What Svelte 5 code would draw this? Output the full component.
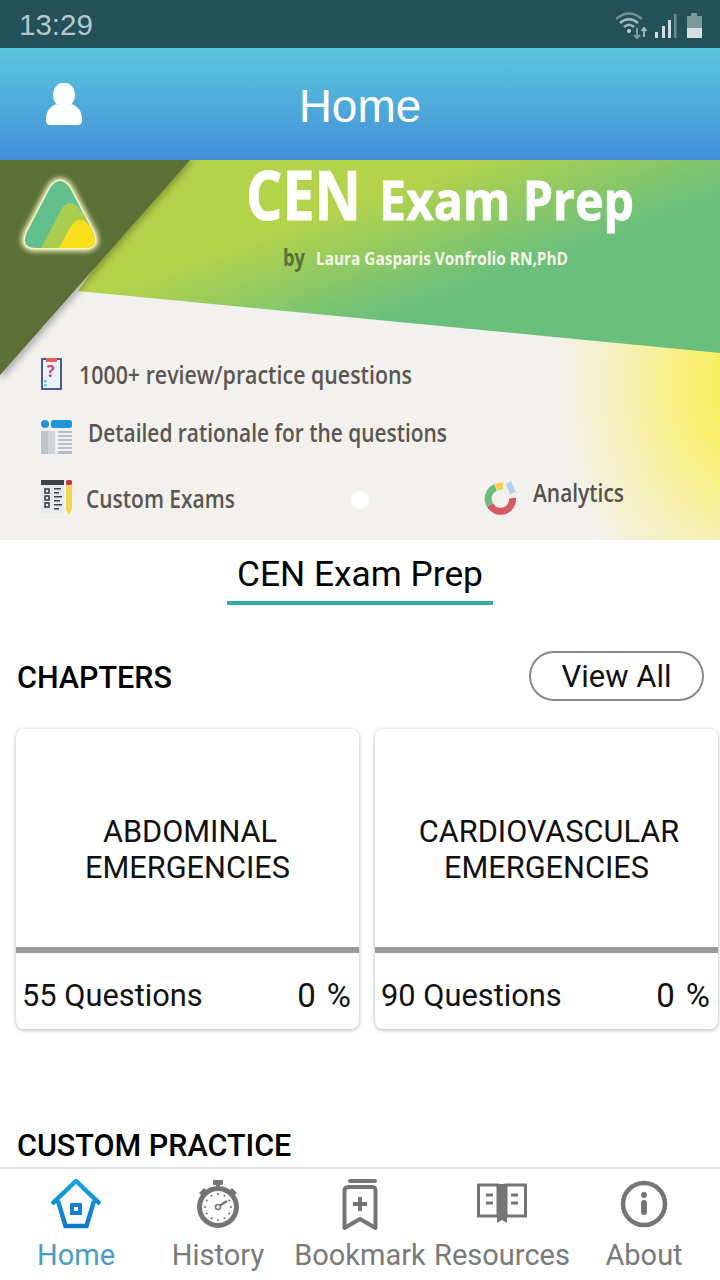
<script>
  const chapters = [
    { name: ['ABDOMINAL', 'EMERGENCIES'], questions: 55 },
    { name: ['CARDIOVASCULAR', 'EMERGENCIES'], questions: 90 }
  ];
  const ticks = Array.from({ length: 12 }, (_, i) => {
    const a = (i * Math.PI) / 6;
    return { x: 22 + 13 * Math.cos(a), y: 28 + 13 * Math.sin(a) };
  });
</script>

<div class="screen">
  <div class="status">
    <span class="time">13:29</span>
    <svg class="status-icons" width="88" height="32" viewBox="0 0 88 32" aria-hidden="true">
      <g fill="none" stroke="#a3bbbe" stroke-width="2.400">
        <path d="M0 10 Q13 -1 26 10" opacity=".6"/>
        <path d="M4 14 Q13 6.500 22 14"/>
        <path d="M8 18 Q13 13.500 18 18"/>
      </g>
      <circle cx="13" cy="22" r="2" fill="#c4d4d6"/>
      <path d="M21 19v10m-3-3 3 3 3-3" stroke="#7f9a9e" stroke-width="2" fill="none"/>
      <path d="M28 28v-9m-2.500 3 2.500-3 2.500 3" stroke="#a8bfc2" stroke-width="1.800" fill="none"/>
      <g fill="#cfdcdd">
        <rect x="39" y="23" width="3" height="6"/>
        <rect x="46" y="17" width="3" height="12"/>
        <rect x="52" y="11" width="3" height="18"/>
      </g>
      <rect x="58" y="5" width="2.500" height="24" fill="#6f8d91"/>
      <rect x="75" y="4" width="6" height="3" fill="#7d989b"/>
      <rect x="71" y="7" width="15" height="12" fill="#7d989b"/>
      <rect x="71" y="19" width="15" height="10" fill="#d5dfe0"/>
    </svg>
  </div>

  <header class="topbar">
    <svg class="user" width="38" height="42" viewBox="0 0 38 42" aria-hidden="true">
      <ellipse cx="19" cy="12" rx="11" ry="12.500" fill="#fff"/>
      <path d="M11 21 Q19 27 27 21 Q37 25 37 36 V38 Q37 42 33 42 H5 Q1 42 1 38 V36 Q1 25 11 21Z" fill="#fff"/>
    </svg>
    <h1>Home</h1>
  </header>

  <section class="banner">
    <svg width="720" height="380" viewBox="0 0 720 380" role="img" aria-label="CEN Exam Prep banner">
      <defs>
        <linearGradient id="lime" gradientUnits="userSpaceOnUse" x1="405" y1="25" x2="445" y2="135">
          <stop offset="0" stop-color="#b3d34b"/>
          <stop offset="1" stop-color="#6bbf7d"/>
        </linearGradient>
        <radialGradient id="sun" gradientUnits="userSpaceOnUse" cx="0" cy="0" r="1" gradientTransform="translate(750 225) scale(195 260)">
          <stop offset="0" stop-color="#fbee4e"/>
          <stop offset=".3" stop-color="#f9ef72"/>
          <stop offset=".65" stop-color="#f6f1b8"/>
          <stop offset="1" stop-color="#f3f1ee"/>
        </radialGradient>
        <filter id="soft" x="-20%" y="-20%" width="140%" height="140%"><feGaussianBlur stdDeviation="3.500"/></filter>
        <filter id="glow" x="-30%" y="-30%" width="160%" height="160%"><feGaussianBlur stdDeviation="2.500"/></filter>
        <clipPath id="logoClip"><path d="M50 28 Q60 14 70 28 L93 72 Q100 88 84 88 H36 Q20 88 27 72Z"/></clipPath>
      </defs>
      <rect width="720" height="380" fill="#f3f1ee"/>
      <rect x="500" y="160" width="220" height="220" fill="url(#sun)"/>
      <polygon points="78,131 720,193 720,0 170,0" fill="url(#lime)"/>
      <polygon points="4,217 194,0 0,0 0,217" fill="#000" opacity=".28" filter="url(#soft)"/>
      <polygon points="0,215 190,0 0,0" fill="#5a7036"/>

      <path d="M50 28 Q60 14 70 28 L93 72 Q100 88 84 88 H36 Q20 88 27 72Z" fill="none" stroke="#f6f2bd" stroke-width="7" filter="url(#glow)"/>
      <path d="M50 28 Q60 14 70 28 L93 72 Q100 88 84 88 H36 Q20 88 27 72Z" fill="none" stroke="#f6f2c8" stroke-width="3"/>
      <g clip-path="url(#logoClip)">
        <rect x="20" y="10" width="80" height="80" fill="#62c08c"/>
        <path d="M40 90 L60 52 Q67 38 77 46 L104 80 V90Z" fill="#a9cb4e"/>
        <path d="M58 90 L70 68 Q78 54 88 64 L104 78 V90Z" fill="#fbdf1b"/>
      </g>

      <text class="bn b hv" x="246" y="60" font-size="68" fill="#fff" textLength="115" lengthAdjust="spacingAndGlyphs">CEN</text>
      <text class="bn b hv" x="379" y="60" font-size="54" fill="#fff" textLength="255" lengthAdjust="spacingAndGlyphs">Exam Prep</text>
      <text class="bn b" x="283" y="106" font-size="24" fill="#5a7036" textLength="22" lengthAdjust="spacingAndGlyphs">by</text>
      <text class="bn b" x="316" y="105" font-size="17" fill="#f6f6e6" textLength="252" lengthAdjust="spacingAndGlyphs">Laura Gasparis Vonfrolio RN,PhD</text>

      <text class="bn m" x="79" y="224" font-size="25" fill="#5a5651" textLength="333" lengthAdjust="spacingAndGlyphs">1000+ review/practice questions</text>
      <text class="bn m" x="88" y="282" font-size="25" fill="#5a5651" textLength="359" lengthAdjust="spacingAndGlyphs">Detailed rationale for the questions</text>
      <text class="bn m" x="86" y="348" font-size="25" fill="#5a5651" textLength="149" lengthAdjust="spacingAndGlyphs">Custom Exams</text>
      <text class="bn m" x="533" y="342" font-size="25" fill="#55514d" textLength="91" lengthAdjust="spacingAndGlyphs">Analytics</text>

      <!-- clipboard -->
      <rect x="42" y="199" width="19" height="30" fill="#e9f1f6" stroke="#4a5a8c" stroke-width="2"/>
      <rect x="46" y="198" width="11" height="4" fill="#e8605c"/>
      <text class="bn b" x="47" y="217" font-size="16" fill="#d83a78">?</text>
      <rect x="44" y="220" width="2.500" height="2.500" fill="#6ec2c8"/>
      <rect x="44" y="224" width="2.500" height="2.500" fill="#6ec2c8"/>

      <!-- rationale -->
      <circle cx="45" cy="264" r="4" fill="#1e98dc"/>
      <rect x="51" y="260" width="21" height="8" rx="2.500" fill="#1e98dc"/>
      <rect x="41" y="271" width="14" height="23" rx="1" fill="#bcc5c9"/>
      <rect x="48" y="271" width="7" height="23" fill="#d0d6d9"/>
      <g fill="#b4bfc3">
        <rect x="58" y="271" width="14" height="2"/><rect x="58" y="275" width="14" height="2"/>
        <rect x="58" y="279" width="14" height="2"/><rect x="58" y="283" width="14" height="2"/>
        <rect x="58" y="287" width="14" height="2"/><rect x="58" y="291" width="14" height="3"/>
      </g>

      <!-- custom exams -->
      <rect x="41" y="320" width="23" height="33" fill="#e6e8f2"/>
      <rect x="41" y="320" width="23" height="5" fill="#3f4246"/>
      <g fill="none" stroke="#3f4246" stroke-width="1.600">
        <rect x="45" y="329" width="4" height="4"/><rect x="45" y="336" width="4" height="4"/><rect x="45" y="343" width="4" height="4"/>
      </g>
      <g fill="#3f4246">
        <rect x="54" y="328" width="7" height="1.500"/><rect x="54" y="332" width="5" height="1.500"/>
        <rect x="54" y="336" width="8" height="1.500"/><rect x="54" y="340" width="6" height="1.500"/>
        <rect x="54" y="344" width="8" height="1.500"/><rect x="54" y="348" width="5" height="1.500"/>
      </g>
      <path d="M66 325 h6 v24 l-3 6 l-3 -6Z" fill="#f5d451"/>
      <rect x="66" y="320" width="6" height="5" rx="1.500" fill="#c6384f"/>

      <!-- analytics donut -->
      <g fill="none" stroke-width="7">
        <path d="M490 345 A12 12 0 0 0 512.500 338" stroke="#d65a63"/>
        <path d="M490 345 A12 12 0 0 1 495.500 327.500" stroke="#6fbd7c"/>
        <path d="M496 327.500 A12 12 0 0 1 503 326" stroke="#f5cf4f"/>
        <path d="M508.500 322.500 L513 333" stroke="#b5d0ef" stroke-width="6"/>
      </g>

      <circle cx="360" cy="340" r="9" fill="#fff"/>
    </svg>
  </section>

  <main class="content">
    <div class="tab"><span>CEN Exam Prep</span></div>

    <div class="section-head">
      <h2>CHAPTERS</h2>
      <button type="button">View All</button>
    </div>

    <div class="cards">
      {#each chapters as c}
        <article class="card">
          <div class="card-name"><span class="first">{c.name[0]}</span><span>{c.name[1]}</span></div>
          <div class="progress"></div>
          <div class="card-foot">
            <span>{c.questions} Questions</span>
            <span class="pct"><span>0</span><span>%</span></span>
          </div>
        </article>
      {/each}
    </div>

    <h2 class="custom">CUSTOM PRACTICE</h2>
  </main>

  <nav class="nav">
    <div class="item active">
      <svg width="50" height="52" viewBox="0 0 50 52" aria-hidden="true">
        <defs>
          <linearGradient id="homeG" gradientUnits="userSpaceOnUse" x1="0" y1="0" x2="0" y2="50">
            <stop offset="0" stop-color="#14a6de"/><stop offset="1" stop-color="#1077c9"/>
          </linearGradient>
        </defs>
        <path d="M1 25 L25 2 L49 25 M7 22 L14.500 47 H35.500 L43 22" fill="none" stroke="url(#homeG)" stroke-width="4.500" stroke-linejoin="miter"/>
        <rect x="19" y="24" width="12" height="12" fill="#1580cf"/>
        <rect x="23" y="28" width="4" height="4" fill="#fff"/>
      </svg>
      <span>Home</span>
    </div>
    <div class="item">
      <svg width="50" height="52" viewBox="0 0 44 52" aria-hidden="true">
        <rect x="17" y="1" width="10" height="5" rx="1" fill="#757575"/>
        <rect x="20" y="5" width="4" height="5" fill="#757575"/>
        <path d="M3 14 L8 9 L12 13 L7 18Z M41 14 L36 9 L32 13 L37 18Z" fill="#757575"/>
        <circle cx="22" cy="28" r="18.500" fill="#fff" stroke="#757575" stroke-width="5"/>
        {#each ticks as t}<circle cx={t.x} cy={t.y} r="1.100" fill="#757575"/>{/each}
        <circle cx="22" cy="28" r="2.500" fill="none" stroke="#757575" stroke-width="1.500"/>
        <path d="M24 26.500 L31 22" stroke="#757575" stroke-width="2.200"/>
      </svg>
      <span>History</span>
    </div>
    <div class="item">
      <svg width="50" height="52" viewBox="0 0 50 52" aria-hidden="true">
        <path d="M15 2 H40" stroke="#757575" stroke-width="4" stroke-linecap="round"/>
        <path d="M10 50 V13 Q10 9 14 9 H38 Q41 9 41 13 V50 L25.500 41Z" transform="translate(-.5 -1)" fill="none" stroke="#757575" stroke-width="4" stroke-linejoin="round"/>
        <path d="M25 18 V32 M18 25 H32" stroke="#757575" stroke-width="4"/>
      </svg>
      <span>Bookmark</span>
    </div>
    <div class="item">
      <svg width="50" height="52" viewBox="0 0 50 52" aria-hidden="true">
        <path d="M21 6 H1.500 V37 H21Z M29 6 H48.500 V37 H29Z" fill="#fff" stroke="#757575" stroke-width="3"/>
        <rect x="21" y="5" width="8" height="33" fill="#757575"/>
        <path d="M20 38 H30 V44 L25 41 L20 44Z" fill="#757575"/>
        <path d="M9 16 H16 M9 24 H16 M34 16 H41 M34 24 H41" stroke="#757575" stroke-width="3"/>
      </svg>
      <span>Resources</span>
    </div>
    <div class="item">
      <svg width="50" height="52" viewBox="0 0 50 52" aria-hidden="true">
        <circle cx="25" cy="25" r="21" fill="none" stroke="#757575" stroke-width="4.500"/>
        <circle cx="25" cy="16" r="3" fill="#757575"/>
        <path d="M25 24 V33" stroke="#757575" stroke-width="6" stroke-linecap="round"/>
      </svg>
      <span>About</span>
    </div>
  </nav>
</div>

<style>
  :global(body) { margin: 0; background: #fff; }
  .screen {
    width: 720px;
    height: 1280px;
    display: flex;
    flex-direction: column;
    overflow: hidden;
    font-family: Roboto, sans-serif;
    color: #111;
    background: #fff;
  }
  .status {
    height: 48px;
    flex: none;
    background: #24505a;
    display: flex;
    align-items: center;
    justify-content: space-between;
    padding: 0 16px 0 19px;
    box-sizing: border-box;
  }
  .time { font: 29.500px "Liberation Sans", sans-serif; color: #b4c8cb; padding-top: 2px; }
  .status-icons { margin-top: 1px; }
  .topbar {
    position: relative;
    height: 112px;
    flex: none;
    display: flex;
    align-items: center;
    justify-content: center;
    background: linear-gradient(#5bc6de, #428fd8);
  }
  .user { position: absolute; left: 45px; top: 35px; }
  h1 {
    margin: 0;
    padding-top: 3px;
    font: 400 46px "Liberation Sans", sans-serif;
    color: #fff;
  }
  .banner { height: 380px; flex: none; }
  .banner svg { display: block; overflow: visible; }
  .bn { font-family: "Open Sans", sans-serif; }
  .b { font-weight: 700; }
  .hv { stroke: #fff; stroke-width: 0.8px; }
  .m { font-weight: 600; }
  .content { flex: 1; min-height: 0; overflow: hidden; }
  .tab { display: flex; justify-content: center; padding-top: 12px; }
  .tab span {
    width: 266px;
    height: 53px;
    box-sizing: border-box;
    text-align: center;
    border-bottom: 4px solid #2fae9f;
    font-size: 35.300px;
    line-height: 45px;
    color: #000;
  }
  .section-head {
    display: flex;
    align-items: center;
    justify-content: space-between;
    padding: 46px 16px 0 17px;
  }
  h2 { margin: 0; padding-top: 4px; font-size: 30.500px; font-weight: 500; line-height: 36px; color: #000; }
  .section-head button {
    width: 175px;
    height: 50px;
    padding: 0;
    border: 2px solid #8a8a8a;
    border-radius: 25px;
    background: #fff;
    color: #111;
    font: 400 31px Roboto, sans-serif;
  }
  .cards {
    display: grid;
    grid-template-columns: 343px 343px;
    gap: 16px;
    padding: 28px 0 0 16px;
  }
  .card {
    height: 300px;
    display: flex;
    flex-direction: column;
    border-radius: 8px;
    background: #fff;
    box-shadow: 0 1px 4px rgba(0, 0, 0, 0.3);
    overflow: hidden;
  }
  .card-name {
    height: 218px;
    flex: none;
    display: flex;
    flex-direction: column;
    align-items: center;
    justify-content: center;
    font-size: 30.700px;
    line-height: 36px;
    padding-top: 24px;
    box-sizing: border-box;
    color: #111;
  }
  .first { padding-left: 5px; }
  .progress { height: 6px; flex: none; background: #9a9a9a; }
  .card-foot {
    flex: 1;
    display: flex;
    align-items: center;
    justify-content: space-between;
    padding: 9px 8px 0 6px;
    font-size: 30.800px;
    color: #111;
  }
  .pct { display: flex; gap: 11px; font-size: 33px; }
  .custom { padding: 99px 0 0 17px; }
  .nav {
    height: 113px;
    flex: none;
    box-sizing: border-box;
    border-top: 2px solid #e2e2e2;
    padding: 10px 5px 0;
    display: grid;
    grid-template-columns: repeat(5, 142px);
    background: #fff;
  }
  .item {
    display: flex;
    flex-direction: column;
    align-items: center;
    font-size: 29px;
    line-height: 36px;
    color: #7a7a7a;
    white-space: nowrap;
  }
  .item span { margin-top: 6px; }
  .item svg { flex: none; }
  .item.active { color: #4a9cc6; }
</style>
